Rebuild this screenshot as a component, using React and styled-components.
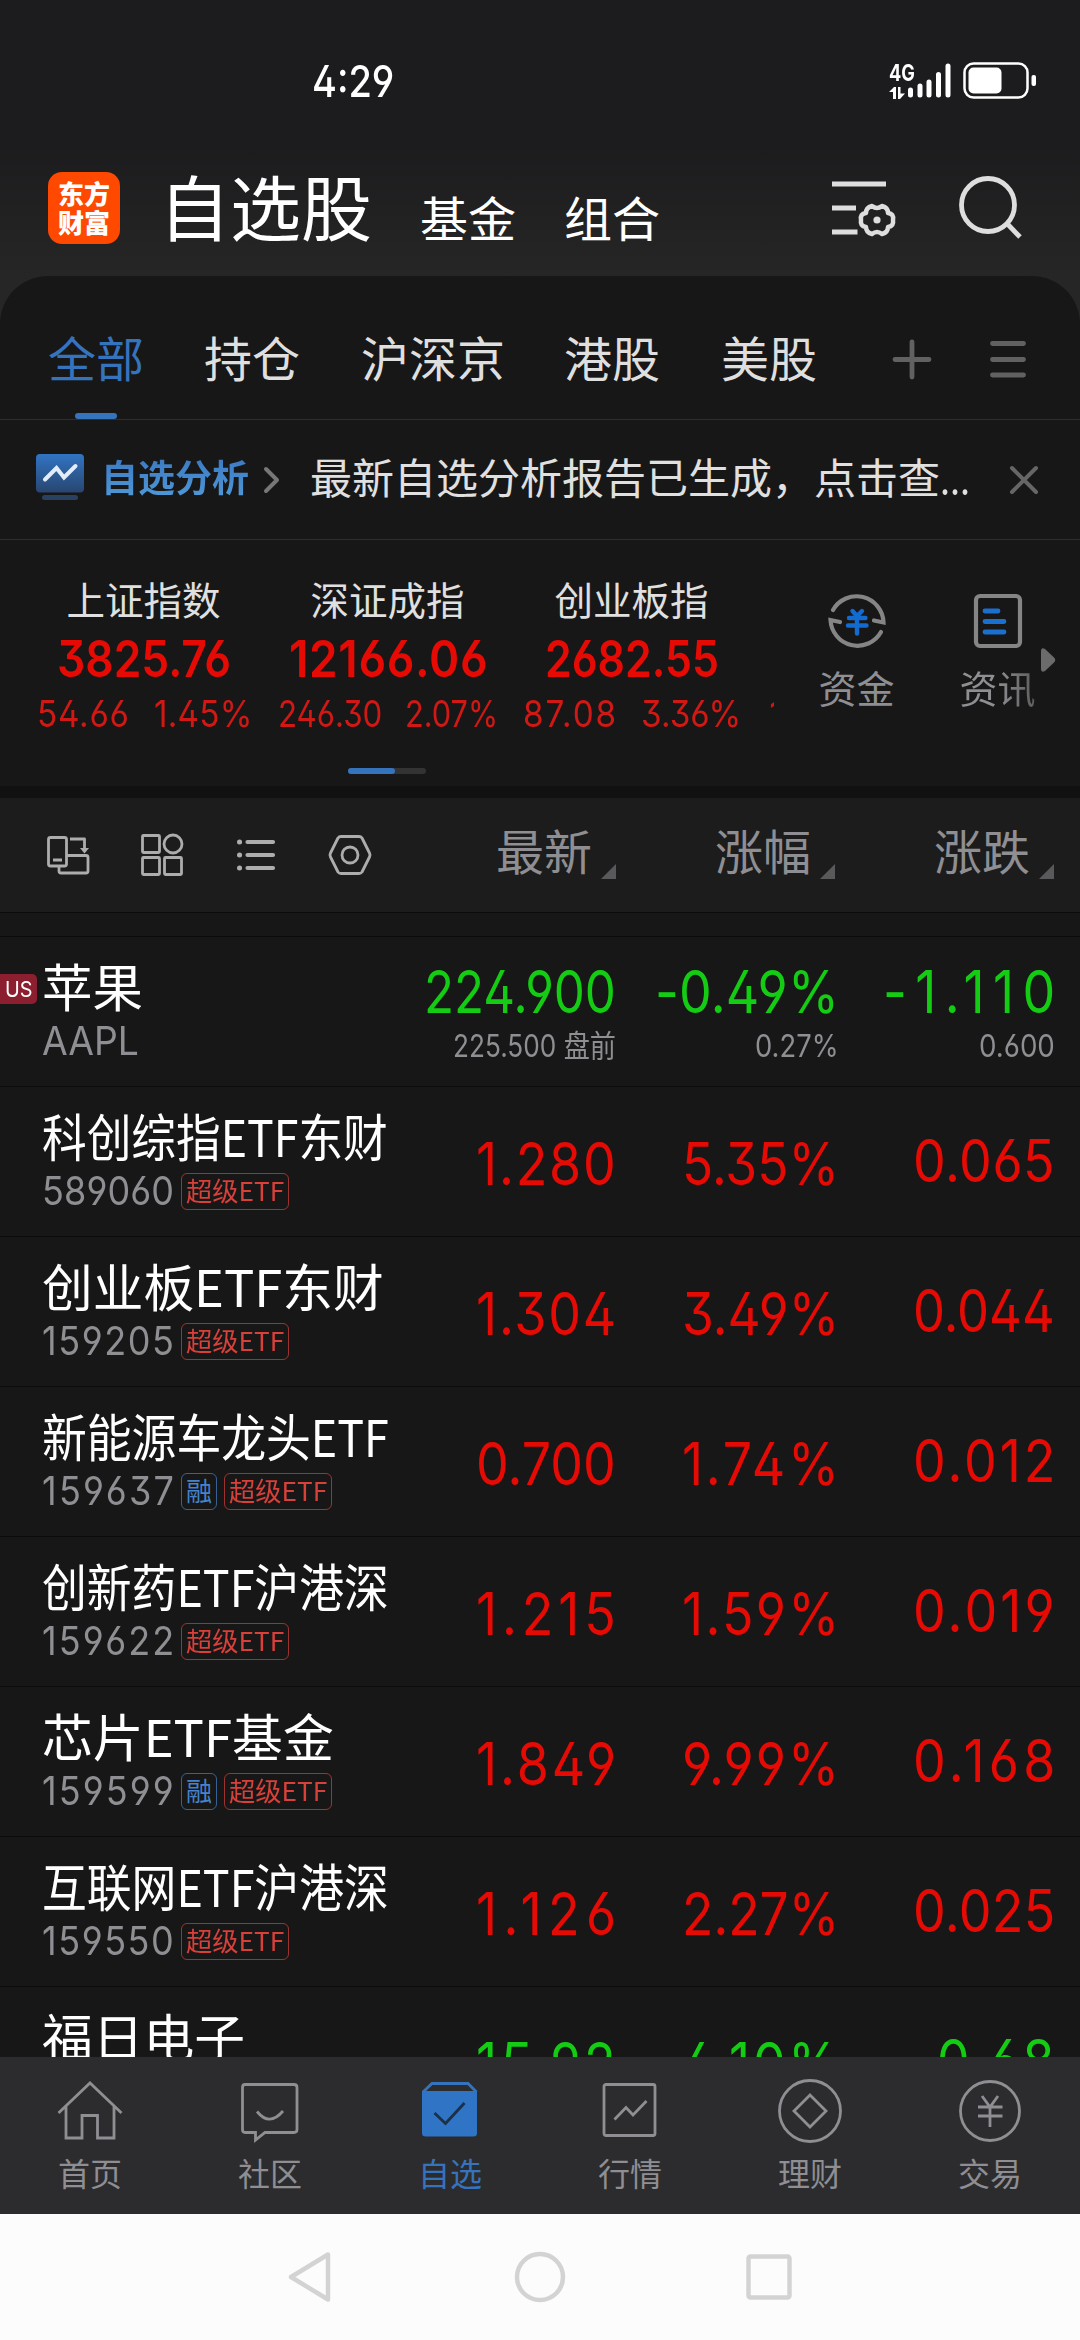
import React, { useLayoutEffect, useRef, useState } from 'react';
import styled, { createGlobalStyle } from 'styled-components'

const numberFont = 'Inter, "Noto Sans CJK SC", sans-serif'
const textFont = '"Noto Sans CJK SC", sans-serif'
const red = '#e60a05'
const green = '#13cc13'
const blue = '#3673bd'
const grey = '#8e8e93'

const indexes = [
  { name: '上证指数', value: '3825.76', w: 174, diff: '54.66', dw: 92, pct: '1.45%', pw: 98, gap: 25 },
  { name: '深证成指', value: '12166.06', w: 199, diff: '246.30', dw: 104, pct: '2.07%', pw: 93, gap: 23 },
  { name: '创业板指', value: '2682.55', w: 174, diff: '87.08', dw: 93, pct: '3.36%', pw: 100, gap: 25 },
]

const stocks = [
  { name: '科创综指ETF东财', nw: 346, code: '589060', price: '1.280', pct: '5.35%', diff: '0.065' },
  { name: '创业板ETF东财', nw: 342, code: '159205', price: '1.304', pct: '3.49%', diff: '0.044' },
  { name: '新能源车龙头ETF', nw: 347, code: '159637', margin: true, price: '0.700', pct: '1.74%', diff: '0.012' },
  { name: '创新药ETF沪港深', nw: 347, code: '159622', price: '1.215', pct: '1.59%', diff: '0.019' },
  { name: '芯片ETF基金', nw: 292, code: '159599', margin: true, price: '1.849', pct: '9.99%', diff: '0.168' },
  { name: '互联网ETF沪港深', nw: 347, code: '159550', price: '1.126', pct: '2.27%', diff: '0.025' },
]

// squeezes a text to the given width, like the auto-sized labels of the list
// glyphs get no wider than max, the rest of the width goes between the letters
function Fit ({ w, max = 2, children }) {
  const ref = useRef(null)
  const [fit, setFit] = useState({ scale: 1, gap: 0 })

  useLayoutEffect(() => {
    const natural = ref.current.offsetWidth
    const scale = Math.min(max, w / natural)
    const gap = (w / scale - natural) / Math.max(1, children.length - 1)
    setFit({ scale, gap })
  }, [w, max, children])

  return (
    <FitBox $w={w}>
      <FitText ref={ref} style={{ transform: `scaleX(${fit.scale})`, letterSpacing: fit.gap }}>{children}</FitText>
    </FitBox>
  )
}

export default function App () {
  return (
    <Screen>
      <GlobalStyle />
      <TopArea>
        <StatusBar>
          <Clock><Fit w={82}>4:29</Fit></Clock>
          <StatusIcons />
        </StatusBar>
        <Header>
          <Logo><span>东方</span><span>财富</span></Logo>
          <Title>自选股</Title>
          <SubTitle $left={48}>基金</SubTitle>
          <SubTitle $left={48}>组合</SubTitle>
          <HeaderIcons />
        </Header>
      </TopArea>

      <Panel>
        <Tabs>
          <Tab $active>全部</Tab>
          <Tab $left={60}>持仓</Tab>
          <Tab $left={61}>沪深京</Tab>
          <Tab $left={59}>港股</Tab>
          <Tab $left={61}>美股</Tab>
          <TabIcons />
        </Tabs>

        <Banner>
          <AnalysisIcon />
          <BannerTitle>自选分析</BannerTitle>
          <svg width="18" height="30" viewBox="0 0 18 30" fill="none" stroke="#77777a" strokeWidth="4" strokeLinecap="round" strokeLinejoin="round">
            <path d="M4 4 L15 15 L4 26" />
          </svg>
          <BannerText>最新自选分析报告已生成，点击查<Fit w={30}>...</Fit></BannerText>
          <CloseIcon />
        </Banner>

        <IndexArea>
          <IndexStrip>
            {indexes.map(i => (
              <IndexItem key={i.name}>
                <IndexName>{i.name}</IndexName>
                <IndexValue><Fit w={i.w} max={0.9}>{i.value}</Fit></IndexValue>
                <IndexChange $gap={i.gap}><Fit w={i.dw} max={0.9}>{i.diff}</Fit><Fit w={i.pw} max={0.9}>{i.pct}</Fit></IndexChange>
              </IndexItem>
            ))}
            <NextIndex>1</NextIndex>
          </IndexStrip>
          <Actions>
            <Action><MoneyIcon />资金</Action>
            <Action><NewsIcon /><FadeText>资讯</FadeText></Action>
          </Actions>
          <MoreArrow>
            <svg width="16" height="26" viewBox="0 0 16 26" fill="#6b6b6b"><path d="M1 4 Q1 0 5 2 L14 10.5 Q16.5 13 14 15.500 L5 24 Q1 26 1 22 Z" /></svg>
          </MoreArrow>
          <Pager><PagerActive /></Pager>
        </IndexArea>
      </Panel>

      <ListHead>
        <ToolIcons />
        {['最新', '涨幅', '涨跌'].map(t => <HeadCell key={t}>{t}<Corner /></HeadCell>)}
      </ListHead>
      <Spacer />

      <List>
        <Row>
          <UsBadge><Fit w={28}>US</Fit></UsBadge>
          <NameCell>
            <Name><Fit w={101}>苹果</Fit></Name>
            <Meta><Fit w={97}>AAPL</Fit></Meta>
          </NameCell>
          <Cell $top={28} $color={green}><Fit w={192} max={0.88}>224.900</Fit><Sub><Fit w={163}>225.500 盘前</Fit></Sub></Cell>
          <Cell $top={28} $color={green} $shift={4}><Fit w={184} max={0.88}>-0.49%</Fit><Sub><Fit w={84}>0.27%</Fit></Sub></Cell>
          <Cell $top={28} $color={green}><Fit w={172} max={0.88}>-1.110</Fit><Sub><Fit w={76}>0.600</Fit></Sub></Cell>
        </Row>
        {stocks.map(s => (
          <Row key={s.code}>
            <NameCell>
              <Name><Fit w={s.nw}>{s.name}</Fit></Name>
              <Meta>
                <Fit w={132} max={0.9}>{s.code}</Fit>
                {s.margin && <Tag $color="#4583cb">融</Tag>}
                <Tag $color="#d8403a"><Fit w={98}>超级ETF</Fit></Tag>
              </Meta>
            </NameCell>
            <Cell $top={50} $color={red}><Fit w={140} max={0.88}>{s.price}</Fit></Cell>
            <Cell $top={50} $color={red} $shift={4}><Fit w={157} max={0.88}>{s.pct}</Fit></Cell>
            <Cell $top={47} $color={red}><Fit w={142} max={0.88}>{s.diff}</Fit></Cell>
          </Row>
        ))}
        <Row>
          <NameCell>
            <Name><Fit w={203}>福日电子</Fit></Name>
          </NameCell>
          <Cell $top={50} $color={green}><Fit w={140} max={0.88}>15.92</Fit></Cell>
          <Cell $top={50} $color={green} $shift={4}><Fit w={184} max={0.88}>-4.10%</Fit></Cell>
          <Cell $top={47} $color={green}><Fit w={145} max={0.88}>-0.68</Fit></Cell>
        </Row>
      </List>

      <TabBar>
        <BarItem><HomeIcon />首页</BarItem>
        <BarItem><ChatIcon />社区</BarItem>
        <BarItem $active><CheckIcon />自选</BarItem>
        <BarItem><MarketIcon />行情</BarItem>
        <BarItem><WealthIcon />理财</BarItem>
        <BarItem><TradeIcon />交易</BarItem>
      </TabBar>

      <SystemNav>
        <svg width="46" height="52" viewBox="0 0 46 52"><path d="M40 3.500 L3 26 L40 48.500 Z" /></svg>
        <svg width="52" height="52" viewBox="0 0 52 52"><circle cx="26" cy="26" r="23" /></svg>
        <svg width="46" height="46" viewBox="0 0 46 46"><rect x="2.500" y="2.500" width="41" height="41" rx="2" /></svg>
      </SystemNav>
    </Screen>
  )
};

function StatusIcons () {
  return (
    <SignalGroup>
      <NetType><b><Fit w={26}>4G</Fit></b>
        <svg width="16" height="12" viewBox="0 0 16 12" fill="#fff"><path d="M0 5 L5 0 H7 V12 H4 V5 Z M9 0 H11.500 V6.500 H16 L11 12 H9 Z" /></svg>
      </NetType>
      <svg width="130" height="40" viewBox="906 61 130 40">
        <g stroke="#fff" strokeWidth="5" strokeLinecap="round">
          <path d="M910.500 90 V95 M920 86 V95 M929 82 V95 M938.500 74.500 V95 M948 66 V95" />
        </g>
        <rect x="964.500" y="63.500" width="63" height="34" rx="9" fill="none" stroke="#fff" strokeWidth="2.500" />
        <rect x="968.500" y="67.500" width="33" height="26" rx="5" fill="#fff" />
        <rect x="1031.500" y="75" width="4.500" height="11" rx="2" fill="#fff" />
      </svg>
    </SignalGroup>
  )
}

function HeaderIcons () {
  return (
    <PushRight width="200" height="80" viewBox="824 168 200 80" fill="none" stroke="#dedede" strokeWidth="4.800">
      <path d="M831 184 H885 M831 208 H855 M831 232 H856.500" />
      <path d="M871 206 Q876 210 881 206 Q887 207.500 887 213 Q893 214 892 220 Q893 226 887 227 Q887 232.500 881 234 Q876 230 871 234 Q865 232.500 865 227 Q859 226 860 220 Q859 214 865 213 Q865 207.500 871 206 Z" strokeLinejoin="round" strokeWidth="4.500" />
      <circle cx="876" cy="220" r="3.600" fill="#dedede" stroke="none" />
      <circle cx="987" cy="205" r="26.500" />
      <path d="M1006 223.500 L1019 237" />
    </PushRight>
  )
}

function TabIcons () {
  return (
    <TabSvg width="140" height="50" viewBox="890 334 140 50" stroke="#616161" strokeWidth="4.800" strokeLinecap="round">
      <path d="M895 359.500 H929 M912 342 V377 M992.500 343.500 H1023.500 M992.500 359.500 H1023.500 M992.500 375 H1023.500" />
    </TabSvg>
  )
}

function AnalysisIcon () {
  return (
    <svg width="49" height="47" viewBox="0 0 49 47">
      <defs>
        <linearGradient id="box" x1="0" y1="0" x2="0" y2="1">
          <stop offset="0" stopColor="#3174c4" />
          <stop offset="1" stopColor="#28466f" />
        </linearGradient>
      </defs>
      <rect width="48" height="38.500" rx="4" fill="url(#box)" />
      <rect x="6" y="41" width="36" height="5" rx="2.500" fill="#294160" />
      <path d="M9 25.500 L20.500 14 L28 23.500 L39.500 12" fill="none" stroke="#e3edfa" strokeWidth="4" strokeLinecap="round" />
    </svg>
  )
}

function CloseIcon () {
  return (
    <PushRight width="30" height="30" viewBox="0 0 30 30" stroke="#666" strokeWidth="4" strokeLinecap="round">
      <path d="M3 3 L27 27 M27 3 L3 27" />
    </PushRight>
  )
}

function MoneyIcon () {
  return (
    <svg width="60" height="60" viewBox="0 0 60 60" fill="none" strokeLinecap="round">
      <g stroke="#858585" strokeWidth="4.200">
        <path d="M6 19 A27 27 0 0 1 56.500 31.500 L47 29.500" />
        <path d="M54 41 A27 27 0 0 1 3.500 29 L13 31" />
      </g>
      <path d="M25.500 20 L30 25 L35 20 M22 27 H38.500 M21 34.500 H39.500 M30 25 V42.500" stroke="#136bd0" strokeWidth="4.400" />
    </svg>
  )
}

function NewsIcon () {
  return (
    <svg width="60" height="60" viewBox="0 0 60 60" fill="none" strokeLinecap="round">
      <rect x="8" y="5" width="44" height="50" rx="4" stroke="#858585" strokeWidth="4.200" />
      <path d="M17 20 H30 M17 30.500 H36 M17 41 H36" stroke="#1b70cf" strokeWidth="4.800" />
    </svg>
  )
}

function ToolIcons () {
  return (
    <svg width="340" height="46" viewBox="40 832 340 46" fill="none" stroke="#adadad" strokeWidth="2.800" strokeLinejoin="round">
      <rect x="48.500" y="837.500" width="18" height="28.500" rx="2" />
      <path d="M53 860 H62 M70 839 H84.500 V848 M67 855.500 H86 Q88 855.500 88 857.500 V871 Q88 873 86 873 H61 Q59 873 59 871 V866" />
      <path d="M80 848 H89 L84.500 853.500 Z" fill="#adadad" stroke="none" />
      <rect x="142.500" y="835.500" width="17" height="17" rx="1" />
      <circle cx="173" cy="844" r="9" />
      <rect x="142.500" y="857.500" width="17" height="17" rx="1" />
      <rect x="164.500" y="857.500" width="17" height="17" rx="1" />
      <g strokeWidth="4.200" strokeLinecap="round">
        <path d="M239.500 842 h.1 M239.500 855 h.1 M239.500 868 h.1" strokeWidth="5" />
        <path d="M247.500 842 H273 M247.500 855 H273 M247.500 868 H273" />
      </g>
      <path d="M341 836.500 H359 Q361 836.500 362 838 L369.500 853 Q370.500 855 369.500 857 L362 872 Q361 873.500 359 873.500 H341 Q339 873.500 338 872 L330.500 857 Q329.500 855 330.500 853 L338 838 Q339 836.500 341 836.500 Z" />
      <circle cx="350" cy="855" r="8" />
    </svg>
  )
}

function HomeIcon () {
  return (
    <svg viewBox="0 0 70 66">
      <path d="M3.500 35 L35 5 L66.500 35 M11 28 V60 H27 V37.500 H42.500 V60 H59 V28" />
    </svg>
  )
}

function ChatIcon () {
  return (
    <svg viewBox="0 0 70 66">
      <path d="M10 6.500 H59 Q62 6.500 62 9.500 V51.500 Q62 54.500 59 54.500 H30 L20.500 62 V54.500 H10 Q7.500 54.500 7.500 51.500 V9.500 Q7.500 6.500 10 6.500 Z M22 33.500 Q34.500 49 48 33" />
    </svg>
  )
}

function CheckIcon () {
  return (
    <svg viewBox="0 0 70 66">
      <path d="M8 14 L17 5.500 H53 L61.500 14" stroke={blue} />
      <path d="M7 13 H62 V55 Q62 58.500 58.500 58.500 H10.500 Q7 58.500 7 55 Z" fill="#2f74c5" stroke="none" />
      <path d="M19.500 35 L30.500 45.500 L49.500 25" stroke="#1c3048" />
    </svg>
  )
}

function MarketIcon () {
  return (
    <svg viewBox="0 0 70 66">
      <rect x="9" y="6.500" width="51" height="51" rx="2" />
      <path d="M19.500 41.500 L31 29.500 L38 37 L51.500 23" />
    </svg>
  )
}

function WealthIcon () {
  return (
    <svg viewBox="0 0 70 66">
      <circle cx="35" cy="33" r="30.500" />
      <path d="M35 17 L51 33 L35 49 L19 33 Z" />
    </svg>
  )
}

function TradeIcon () {
  return (
    <svg viewBox="0 0 70 66">
      <circle cx="35" cy="33" r="29.500" />
      <path d="M27 18 L35 29 L43 18 M23 29 H47.500 M23 38 H47.500 M35 29 V49" />
    </svg>
  )
}

const GlobalStyle = createGlobalStyle`
  body {
    margin: 0;
    background: #171717;
  }
  * {
    box-sizing: border-box;
  }
  svg {
    display: block;
    flex: none;
  }
`

const FitBox = styled.span`
  display: inline-block;
  flex: none;
  width: ${p => p.$w}px;
  white-space: nowrap;
  text-align: left;
`

const FitText = styled.span`
  display: inline-block;
  transform-origin: left center;
`

const Screen = styled.div`
  display: flex;
  flex-direction: column;
  width: 1080px;
  height: 2340px;
  overflow: hidden;
  background: #171717;
  font-family: ${textFont};
  color: #e0e0e0;
`

const TopArea = styled.header`
  height: 324px;
  margin-bottom: -48px;
  flex: none;
  background: linear-gradient(#1c1c1e 0, #1c1c1e 145px, #262626 276px);
`

const StatusBar = styled.div`
  display: flex;
  justify-content: space-between;
  align-items: center;
  height: 138px;
  padding: 24px 44px 0 312px;
`

const Clock = styled.div`
  font: 500 44px/44px ${numberFont};
  font-feature-settings: "ss01";
  color: #fff;
`

const SignalGroup = styled.div`
  display: flex;
  align-items: center;
`

const NetType = styled.div`
  width: 17px;
  height: 36px;
  color: #fff;

  b {
    display: block;
    height: 24px;
    font: 700 23px/20px ${numberFont};
  }
`

const Header = styled.div`
  display: flex;
  align-items: center;
  height: 138px;
  padding: 2px 55px 0 48px;
`

const Logo = styled.div`
  display: flex;
  flex-direction: column;
  align-items: center;
  justify-content: center;
  width: 72px;
  height: 72px;
  border-radius: 14px;
  background: #ff4800;
  color: #fff;
  font-size: 26px;
  font-weight: 900;
  line-height: 29px;
  padding-bottom: 3px;
`

const Title = styled.h1`
  margin: -9px 0 0 39px;
  font-size: 71px;
  font-weight: 400;
  line-height: 80px;
  color: #fff;
`

const SubTitle = styled.span`
  margin: 15px 0 0 ${p => p.$left}px;
  font-size: 48px;
  line-height: 56px;
  color: #fff;
`

const PushRight = styled.svg`
  margin-left: auto;
`

const Panel = styled.main`
  flex: none;
  height: 510px;
  border-radius: 48px 48px 0 0;
  background: #171717;
`

const Tabs = styled.nav`
  display: flex;
  align-items: center;
  height: 144px;
  padding: 16px 50px 0 48px;
  border-bottom: 1px solid #2e2e2e;
`

const TabSvg = styled(PushRight)`
  margin-top: 6px;
`

const Tab = styled.span`
  position: relative;
  margin-left: ${p => p.$left || 0}px;
  font-size: 48px;
  line-height: 60px;
  color: ${p => (p.$active ? blue : '#dfdfdf')};

  &::after {
    content: "";
    display: ${p => (p.$active ? 'block' : 'none')};
    position: absolute;
    left: 27px;
    bottom: -33px;
    width: 42px;
    height: 6px;
    border-radius: 3px;
    background: ${blue};
  }
`

const Banner = styled.section`
  display: flex;
  align-items: center;
  height: 120px;
  padding: 0 41px 0 36px;
  border-bottom: 1px solid #2e2e2e;

  & > svg:first-child {
    margin-top: -4px;
  }
`

const BannerTitle = styled.b`
  margin: -7px 13px 0 16px;
  font-size: 37px;
  line-height: 44px;
  font-weight: 700;
  background: linear-gradient(#3a77c2, #4f98d6);
  -webkit-background-clip: text;
  background-clip: text;
  color: transparent;
`

const BannerText = styled.span`
  margin: -8px 0 0 30px;
  font-size: 42px;
  line-height: 50px;
  white-space: nowrap;
`

const IndexArea = styled.section`
  position: relative;
  display: flex;
  flex-wrap: wrap;
  align-content: flex-start;
  height: 246px;
`

const IndexStrip = styled.div`
  display: flex;
  width: 774px;
  height: 220px;
  padding: 34px 0 0 22px;
  overflow: hidden;
`

const IndexItem = styled.div`
  flex: none;
  display: flex;
  flex-direction: column;
  align-items: center;
  width: 244px;
`

const IndexName = styled.div`
  margin-left: -1px;
  font-size: 38.500px;
  line-height: 48px;
`

const IndexValue = styled.div`
  margin-top: 12px;
  font: 560 51px/50px ${numberFont};
  font-feature-settings: "ss01";
  color: ${red};
`

const IndexChange = styled.div`
  display: flex;
  gap: ${p => p.$gap}px;
  margin-top: 10px;
  font: 400 37px/40px ${numberFont};
  font-feature-settings: "ss01";
  color: #d01814;
`

const NextIndex = styled.div`
  flex: none;
  padding: 120px 0 0 15px;
  font: 400 37px/40px ${numberFont};
  color: #d01814;
`

const Actions = styled.div`
  display: flex;
  width: 294px;
  padding: 51px 0 0 0;
`

const Action = styled.div`
  display: flex;
  flex-direction: column;
  align-items: center;
  width: 141px;
  margin-left: 12px;
  font-size: 38px;
  line-height: 46px;
  color: ${grey};

  & + & {
    margin-left: 0;
  }
  svg {
    margin-bottom: 13px;
  }
`

const FadeText = styled.span`
  background: linear-gradient(90deg, ${grey} 50%, #5c5c5e);
  -webkit-background-clip: text;
  background-clip: text;
  color: transparent;
`

const MoreArrow = styled.div`
  position: absolute;
  right: 24px;
  top: 107px;
`

const Pager = styled.div`
  width: 78px;
  height: 6px;
  margin: 8px 0 0 348px;
  border-radius: 3px;
  background: #333;
`

const PagerActive = styled.div`
  width: 47px;
  height: 6px;
  border-radius: 3px;
  background: ${blue};
`

const ListHead = styled.div`
  display: flex;
  align-items: center;
  flex: none;
  height: 126px;
  padding-left: 40px;
  border-top: 12px solid #111;
  background: #1c1c1c;
`

const HeadCell = styled.div`
  display: flex;
  justify-content: flex-end;
  width: 219px;
  font-size: 48px;
  line-height: 60px;
  color: ${grey};
  padding-bottom: 12px;

  svg + & {
    width: 236px;
  }
`

const Corner = styled.i`
  align-self: flex-end;
  width: 15px;
  height: 15px;
  margin: 0 0 0 9px;
  background: #59595b;
  clip-path: polygon(100% 0, 100% 100%, 0 100%);
`

const Spacer = styled.div`
  flex: none;
  height: 24px;
  border-top: 1px solid #0c0c0c;
`

const List = styled.div`
  height: 1121px;
  flex: none;
  overflow: hidden;
`

const Row = styled.div`
  position: relative;
  display: grid;
  grid-template-columns: 396px 220px 219px 220px;
  height: 150px;
  border-top: 1px solid #0c0c0c;
`

const UsBadge = styled.div`
  position: absolute;
  left: 0;
  top: 37px;
  width: 37px;
  height: 30px;
  padding-left: 5px;
  border-radius: 0 5px 5px 0;
  background: #8c1f2f;
  color: #fff;
  font: 400 22px/30px ${numberFont};
`

const NameCell = styled.div`
  padding: 20px 0 0 42px;
`

const Name = styled.div`
  font-size: 51px;
  line-height: 56px;
  height: 56px;
  color: #fff;
`

const Meta = styled.div`
  display: flex;
  align-items: center;
  gap: 7px;
  margin-top: 9px;
  height: 38px;
  font: 400 40px/38px ${numberFont};
  font-feature-settings: "ss01";
  color: ${grey};
`

const Tag = styled.span`
  flex: none;
  height: 37px;
  padding: 0 4px;
  border: 1.500px solid ${p => p.$color}b0;
  border-radius: 6px;
  font: 400 26px/31px ${textFont};
  color: ${p => p.$color};
`

const Cell = styled.div`
  display: flex;
  flex-direction: column;
  align-items: flex-end;
  padding-top: ${p => p.$top}px;
  margin-right: -${p => p.$shift || 0}px;
  font: 400 59px/54px ${numberFont};
  font-feature-settings: "ss01";
  color: ${p => p.$color};
`

const Sub = styled.div`
  margin-top: 9px;
  font-size: 31px;
  line-height: 36px;
  color: ${grey};
`

const TabBar = styled.nav`
  display: grid;
  grid-template-columns: repeat(6, 1fr);
  flex: none;
  height: 157px;
  background: #2c2c2e;
`

const BarItem = styled.div`
  display: flex;
  flex-direction: column;
  align-items: center;
  padding-top: 21px;
  font-size: 32px;
  line-height: 40px;
  color: ${p => (p.$active ? blue : grey)};

  svg {
    width: 70px;
    height: 66px;
    margin-bottom: 8px;
    fill: none;
    stroke: ${grey};
    stroke-width: 2.800;
  }
`

const SystemNav = styled.footer`
  display: flex;
  align-items: center;
  justify-content: center;
  gap: 180px;
  flex: none;
  height: 126px;
  background: #fcfcfc;

  svg {
    fill: none;
    stroke: #d3d3d3;
    stroke-width: 4.500;
    stroke-linejoin: round;
  }
`
